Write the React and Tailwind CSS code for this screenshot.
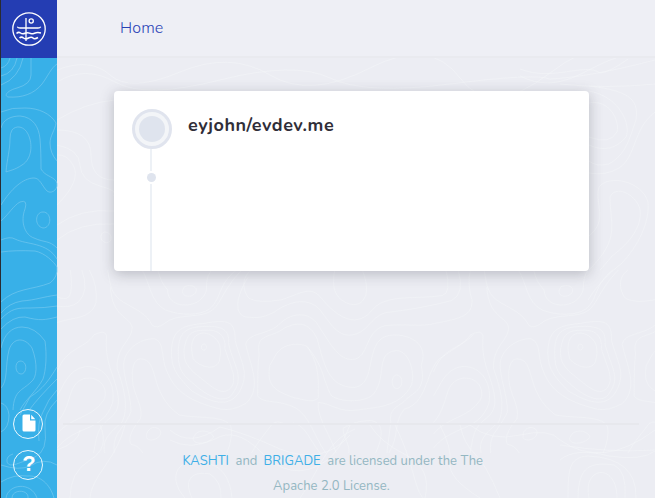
const rail = [
  'M1 68Q8 66 10 58M1 76Q14 73 17 58M1 85Q19 78 23 58M31 58V75Q31 84 17 88C9 90 3 95 8 97C22 98 34 94 42 84C48 76 51 68 57 64',
  'M1 112Q12 107 25 108C39 108 51 114 56 123C55 130 50 136 50 143Q50 153 57 161',
  'M1 128C3 119 12 116 20 116C33 117 39 127 40 139Q41 150 41 169C45 176 52 176 56 181C60 188 52 195 47 191C42 186 40 178 34 178C23 178 11 189 1 205',
  'M12 130C16 125 24 126 28 134C33 144 32 159 22 165C15 170 8 171 6 172C7 159 10 150 10 139Q10 133 12 130Z',
  'M1 221C8 215 14 205 20 202Q28 199 25 209C20 222 25 235 34 238C45 243 49 240 57 248',
  'M43 212C35 212 34 226 43 228C52 228 52 212 43 212Z',
  'M1 240Q10 236 15 239C27 245 47 242 57 259M1 252Q15 250 35 251C45 253 54 262 57 267Q58 277 50 283C32 290 15 288 1 302',
  'M1 313Q9 303 22 301C36 300 42 297 57 295M1 319C12 308 17 308 30 308Q45 308 57 306M1 329Q13 316 25 317C40 321 45 320 57 317',
  'M1 348C4 334 12 327 22 327Q35 327 45 341C47 355 46 370 43 379C36 392 25 400 20 410',
  'M1 388C8 381 5 366 9 350C13 337 25 337 32 348C38 364 37 378 31 382C22 391 14 390 13 410',
  'M20 361C14 362 15 374 21 374C27 374 28 361 20 361Z',
  'M57 367C49 380 43 389 30 397L20 415M57 379Q38 398 30 409M57 390Q48 399 43 412Q37 422 39 441',
  'M1 432Q9 428 9 415Q8 405 1 403M57 400Q43 414 45 428Q48 451 35 457C20 462 10 469 7 462Q6 456 13 454',
  'M1 482Q14 474 27 476C40 475 50 484 54 498M12 498C12 489 29 489 28 498M6 498C8 484 31 481 37 498M1 465Q19 471 30 466Q44 457 57 465'
];

const tile = [
  'M0 70Q20 80 32 70Q42 50 35 0M0 95Q35 100 55 85Q86 55 65 0M0 138C40 123 90 130 102 85Q108 45 85 0',
  'M133 0C140 45 143 65 175 85C210 105 235 115 250 145Q262 155 282 140C310 115 365 125 395 112C430 98 430 55 485 0',
  'M223 0C244 35 245 85 285 105C325 120 375 120 400 102C432 75 420 40 470 0M265 0Q270 30 290 52C290 100 355 100 378 76C405 50 380 35 405 0M335 43C320 63 338 73 354 67C375 58 365 33 335 43Z',
  'M510 0C475 25 495 68 505 75Q530 88 590 78C650 55 665 45 690 70C720 108 750 130 780 131C825 127 820 95 860 82C900 68 960 75 1010 67Q1035 60 1020 0',
  'M500 20C470 70 465 110 490 122C530 130 550 120 570 110C600 88 655 65 690 105C720 145 735 172 770 171C815 166 820 125 860 112C920 105 980 95 1035 80Q1070 62 1052 0',
  'M728 0C720 45 728 70 755 84C780 98 805 90 811 60Q814 30 800 0',
  'M0 268C25 200 70 210 97 170Q127 155 130 173C128 210 130 225 140 260C165 330 170 360 143 385C105 415 105 430 96 480',
  'M0 330C20 300 30 260 75 253C130 250 155 305 145 350C120 425 50 405 0 467M0 400C42 353 25 300 70 285C115 275 137 315 122 342C90 390 35 385 0 430',
  'M140 45C145 125 190 120 197 150C198 185 153 200 158 260C180 320 187 365 170 400C125 435 120 455 125 480M255 180C215 180 178 210 175 245C173 280 195 330 194 372Q187 390 158 430Q147 450 150 480',
  'M255 180C285 190 270 230 290 270C315 330 370 350 430 365Q460 370 495 350C540 310 505 245 495 195C500 165 550 170 580 145C610 112 660 105 685 145C720 200 740 235 775 235C820 230 805 160 860 146C905 140 960 150 990 140C1060 127 1090 120 1088 78Q1075 40 1084 0',
  'M198 290C195 250 205 233 220 233C270 235 238 320 320 380C370 390 440 380 456 410Q462 440 445 480M198 290C200 325 227 358 219 390C185 430 190 450 194 457Q214 460 225 480',
  'M300 210C303 155 330 145 385 140C450 128 468 135 467 185C485 250 505 270 478 320C450 365 400 345 355 318C305 270 300 250 300 210Z',
  'M318 210C320 163 338 150 385 148C445 145 452 165 450 195C467 258 490 280 463 320C442 360 387 325 360 300C324 270 318 260 318 210Z',
  'M333 210C340 168 350 158 390 158C430 155 443 180 440 205C455 255 475 285 455 310C430 335 400 300 360 270C335 245 333 235 333 210Z',
  'M353 210C350 160 390 158 410 175C430 190 432 210 425 240C415 265 375 255 357 233ZM383 194C376 200 378 210 386 210C395 207 393 193 383 194Z',
  'M530 220C520 165 560 180 595 153C640 130 665 145 682 180C700 245 710 308 780 308C840 300 805 190 865 173C900 163 980 180 955 250C970 320 930 320 910 345C890 360 870 365 875 400L865 480',
  'M530 220C525 260 527 310 526 330C540 350 570 340 610 355C660 370 670 430 705 480M575 220C600 185 645 195 655 200C690 250 685 290 685 335C670 350 650 340 622 335C565 315 550 300 558 250Z',
  'M655 200C700 250 700 300 720 330C750 350 815 345 830 325C865 280 835 220 885 212C920 205 940 265 930 300C900 365 820 360 790 367C740 375 720 350 685 347C680 385 720 440 732 480',
  'M890 275C876 277 875 306 889 311C907 312 911 277 890 275ZM510 480C530 445 545 430 565 403C585 390 590 410 620 402C650 405 665 450 690 480',
  'M750 415C775 400 795 395 825 395C870 405 842 465 835 480M750 415C750 440 770 460 765 480M870 480C900 430 880 405 910 365C970 350 965 275 1000 235C1050 200 1085 180 1090 170',
  'M235 430C240 412 260 407 270 420C280 438 245 455 235 440ZM365 428C380 417 405 423 411 438C395 458 355 460 357 440Z'
];

const upper = [
  'M57 70Q90 57 110 75T180 72T270 75T370 68T460 78T550 73T655 58M57 82Q85 65 115 82T220 80T330 78T450 84T550 79Q590 77 655 60',
  'M520 69C553 82 585 62 600 73Q610 72 628 59M520 76C560 96 586 67 616 58M560 84Q605 89 655 84',
  'M589 103C609 99 620 120 617 132Q610 145 589 137M589 91C621 97 631 126 626 137Q611 155 589 145M589 86C635 91 638 103 636 120C629 140 626 154 609 164Q596 167 589 161M655 112C632 130 637 156 619 168Q606 176 589 173',
  'M589 236C609 220 594 203 599 187C609 174 642 181 648 202C650 222 638 246 622 263Q600 280 588 300M589 270C621 238 610 225 610 197C615 185 635 193 640 209C643 230 624 247 612 256Q604 266 600 270',
  'M57 120Q85 103 114 100M57 130Q91 130 91 155T114 180M57 145Q79 149 80 165T100 186T114 196M57 225Q81 208 114 211M57 240Q79 222 114 224M104 232C96 236 105 248 111 240Q112 232 104 232ZM57 205Q82 180 73 165Q67 154 57 155'
];

function Contours() {
  return (
    <svg className="pointer-events-none absolute inset-0 h-full w-full" viewBox="0 0 655 498" fill="none">
      <g stroke="#f5f6f9" strokeOpacity=".48">
        {upper.map((d) => <path key={d} d={d} />)}
        <g transform="translate(57 270) scale(.3814)" strokeWidth="2.6">
          {tile.map((d) => <path key={d} d={d} />)}
          <g transform="translate(987 0)">{tile.slice(6).map((d) => <path key={d} d={d} />)}</g>
          <path d="M1250 0Q1255 30 1277 52C1280 100 1342 100 1365 76C1392 50 1370 35 1392 0M1210 0C1231 35 1232 85 1272 105C1312 120 1362 120 1387 102C1419 75 1407 40 1457 0M1120 0C1127 45 1130 65 1162 85C1197 105 1222 115 1237 145Q1249 155 1269 140C1297 115 1352 125 1382 112C1417 98 1417 55 1472 0M1322 43C1307 63 1325 73 1341 67C1362 58 1352 33 1322 43ZM1497 0C1462 25 1482 68 1492 75Q1517 88 1568 78" />
        </g>
        <path d="M170 430Q190 448 220 427Q245 433 280 449Q323 466 350 435M170 440Q190 451 215 439Q235 427 259 450Q291 485 326 461Q340 451 350 425M355 429C325 442 320 470 300 498M395 425Q407 449 415 480T440 498M370 425Q380 442 406 455T425 498M185 498C165 475 180 456 205 463Q229 466 232 498M192 498C182 477 195 471 210 474Q222 482 221 498M100 425Q110 448 90 460T70 498M57 450Q79 442 80 430M125 425Q120 445 105 466T90 498M440 425Q452 448 450 463T480 498M460 425Q464 444 475 454T500 498M470 425Q490 442 520 435T560 440Q602 470 655 430M560 445Q610 453 655 450M560 460Q575 447 609 456Q642 461 655 451M568 498C568 470 569 457 588 456Q637 458 636 498M578 498C578 465 592 462 614 465Q627 471 625 498M589 498C582 466 617 462 617 498" />
      </g>
      <path d="M1 58H57V498H1Z" fill="#38b0e8" />
      <g stroke="#79caef" strokeOpacity=".8" strokeWidth=".8">
        {rail.map((d) => <path key={d} d={d} />)}
      </g>
    </svg>
  );
}

function Logo() {
  return (
    <svg width="36" height="36" viewBox="0 0 36 36" fill="none" stroke="white" strokeWidth="1.3">
      <circle cx="18" cy="18" r="16.2" />
      <circle cx="20.2" cy="10" r="2.1" />
      <path d="M15 7V30M6.3 15.7Q7 17 9 17H27Q29 17 29.7 15.7" />
      <path d="M5.5 22.5Q7.5 20.5 9.5 22T14 22.3T18.5 22.2T23.5 22.2T30 22M8.5 27Q10.5 25.3 12.5 27T17.5 27T22 27T27 26.5" strokeWidth="1.5" />
    </svg>
  );
}

export default function App() {
  return (
    <div className="relative flex h-[498px] w-[655px] overflow-hidden bg-[#ecedf3] font-['Nunito','Open_Sans',sans-serif]">
      <Contours />
      <aside className="relative flex w-[57px] shrink-0 flex-col justify-between border-l border-[#292b32]">
        <div className="flex h-[58px] items-center justify-center bg-[#243db3]"><Logo /></div>
        <div className="flex flex-col items-center gap-[11px] pr-[2px] pb-[18px]">
          <button className="flex h-[30px] w-[30px] items-center justify-center rounded-full border border-white/90">
            <svg className="mb-[2px] ml-[2px]" width="14" height="18" viewBox="0 0 14 18"><path fill="white" d="M2 .5H8V6.5H13.5V16Q13.5 17.5 12 17.5H2Q.5 17.5.5 16V2Q.5.5 2 .5ZM9.2.7L13.3 5.3H9.2Z" /></svg>
          </button>
          <button className="flex h-[30px] w-[30px] items-center justify-center rounded-full border border-white/90 pb-[2px] pl-[2px] font-['Liberation_Sans',sans-serif] text-[22px] leading-none font-bold text-white">?</button>
        </div>
      </aside>
      <div className="relative flex min-w-0 flex-1 flex-col">
        <header className="flex h-[58px] shrink-0 items-center border-b-2 border-[#e9eaef] bg-[#eeeff5] pl-[63px]">
          <a className="text-base font-light tracking-[0.15px] text-[#2841b5]">Home</a>
        </header>
        <main className="flex h-[365px] shrink-0 items-start pt-[33px] pl-[57px]">
          <section className="flex h-[180px] w-[475px] rounded-[4px] bg-white pl-[18px] shadow-[0_3px_14px_rgba(50,55,70,0.28)]">
            <div className="flex w-10 flex-col items-center pt-[18px]">
              <div className="flex h-10 w-10 shrink-0 items-center justify-center rounded-full border-[3px] border-[#e0e4ee] bg-[#f3f5f8]"><span className="h-[26px] w-[26px] rounded-full bg-[#dfe4ee]" /></div>
              <span className="mr-[2px] h-[22px] w-[2px] bg-[#edf1f6]" />
              <span className="my-[2px] mr-[1px] h-[9px] w-[9px] shrink-0 rounded-full bg-[#dfe4ee]" />
              <span className="mr-[2px] w-[2px] flex-1 bg-[#edf1f6]" />
            </div>
            <h1 className="ml-4 pt-[22px] text-[18px] leading-[25px] font-bold tracking-[0.57px] text-[#302e38]">eyjohn/evdev.me</h1>
          </section>
        </main>
        <footer className="mr-[16px] ml-[6px] flex-1 border-t-2 border-[#e7e8ed] pt-[24px] text-[13px] leading-[25px] tracking-[0.04px] text-[#94b7c2]">
          <p className="ml-[119.5px] whitespace-nowrap"><a className="mr-[6.5px] text-[#3eafe7]">KASHTI</a><span className="mr-[6px]">and</span><a className="mr-[6.5px] text-[#3eafe7]">BRIGADE</a><span>are licensed under the The</span></p>
          <p className="ml-[210px] whitespace-nowrap">Apache 2.0 License.</p>
        </footer>
      </div>
    </div>
  );
}
